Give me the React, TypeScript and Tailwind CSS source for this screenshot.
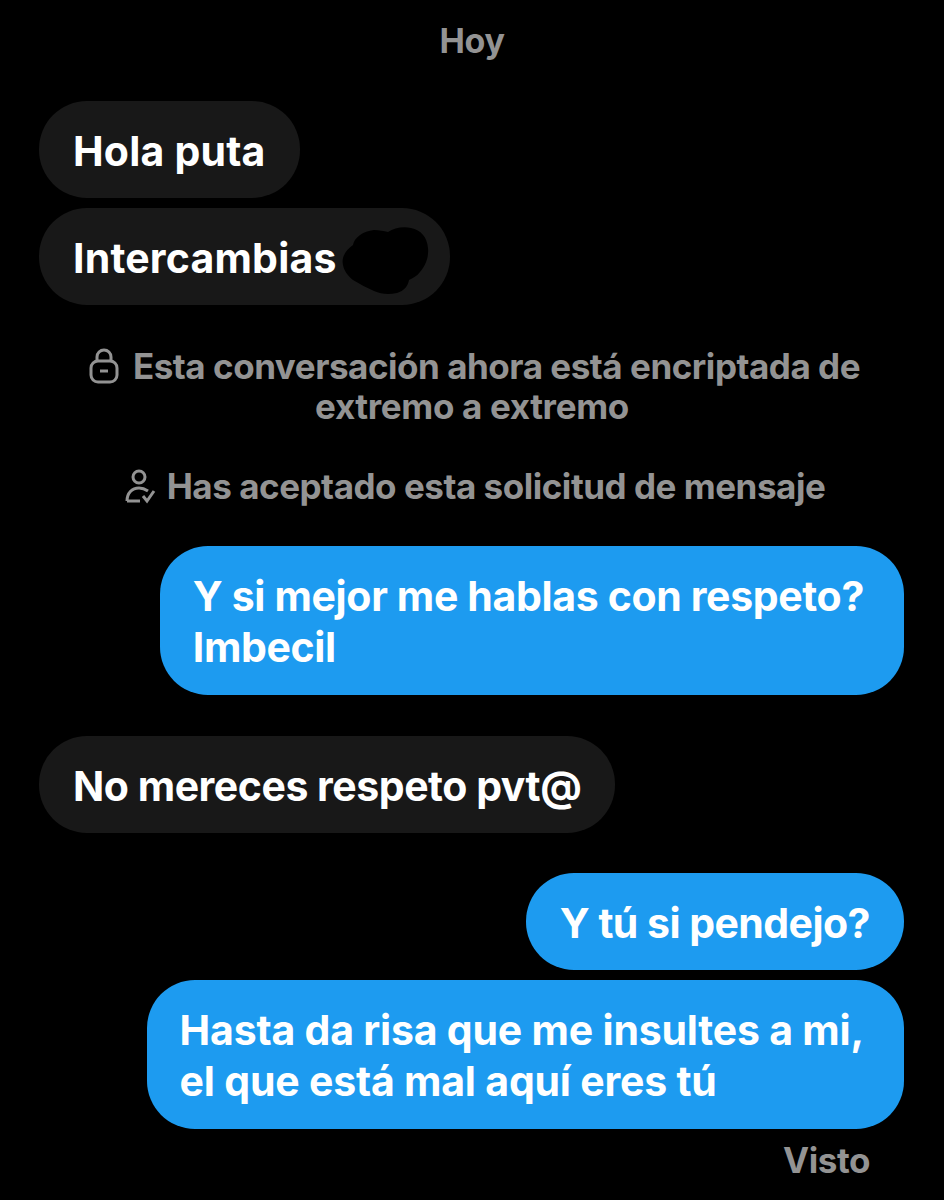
const Received = ({ children }: { children: React.ReactNode }) => (
  <div className="w-fit rounded-[48px] bg-[#181818] px-[34px] pt-[25px] pb-[21px] text-white">{children}</div>
);

const Sent = ({ children, wide }: { children: React.ReactNode; wide?: boolean }) => (
  <div
    className={
      wide
        ? 'ml-auto w-fit rounded-[48px] bg-[#1d9bf0] pt-[25px] pr-[40px] pb-[22px] pl-[33px] text-white'
        : 'ml-auto w-fit rounded-[48px] bg-[#1d9bf0] px-[34px] pt-[25px] pb-[21px] text-white'
    }
  >
    {children}
  </div>
);

const LockIcon = () => (
  <svg width="30" height="36" viewBox="0 0 30 36" fill="none" stroke="#939393" strokeWidth="3" className="mr-[14px] shrink-0">
    <path d="M8 14V9a7 7 0 0 1 14 0v5" />
    <rect x="2" y="13" width="26" height="21" rx="7" />
    <path d="M11 23h8" />
  </svg>
);

const UserCheckIcon = () => (
  <svg width="31" height="36" viewBox="0 0 31 36" fill="none" stroke="#939393" strokeWidth="3" className="mr-[11px] shrink-0">
    <circle cx="14" cy="9" r="6" />
    <path d="M2 33C2 25 7 20 14 20c3 0 6 1 9 3" />
    <path d="M2 33h13" />
    <path d="M18 28l4 5 7-10" />
  </svg>
);

export default function App() {
  return (
    <div className="h-[1200px] w-[944px] overflow-hidden bg-black font-['Inter',sans-serif] text-[41px] leading-[51px] font-bold tracking-[-0.55px]">
      <div className="px-10 pt-[15px]">
        <p className="text-center text-[34px] tracking-[-0.3px] text-[#939393]">Hoy</p>
      </div>

      <div className="mt-[35px] flex flex-col gap-[10px] pl-[39px]">
        <Received>
          <span className="tracking-[0.2px]">Hola puta</span>
        </Received>
        <Received>
          <span className="flex items-center tracking-[0.2px]">
            Intercambias
            <svg width="75" height="51" viewBox="0 0 75 51" className="ml-[4px] overflow-visible">
              <path
                d="M2 32C0 23 6 16 12 12 13 5 22-2 33-3 38-3 43-2 47-1 53-5 62-7 70-5 80-3 86 4 87 15 88 25 84 33 79 39 76 43 72 45 68 47 67 53 63 58 56 60 47 62 40 61 33 58 26 55 19 51 12 47 7 43 3 38 2 32z"
                fill="#000"
              />
            </svg>
          </span>
        </Received>
      </div>

      <div className="mt-[41px] text-center text-[35px] leading-[40px] tracking-[-0.47px] text-[#939393]">
        <p className="flex items-center justify-center pl-[5px]">
          <LockIcon />
          Esta conversación ahora está encriptada de
        </p>
        <p className="tracking-[-0.35px]">extremo a extremo</p>
        <p className="mt-[40px] flex items-center justify-center pl-[6px]">
          <UserCheckIcon />
          Has aceptado esta solicitud de mensaje
        </p>
      </div>

      <div className="mt-[40px] pr-[40px]">
        <Sent wide>
          <span className="tracking-[-0.35px]">
            Y si mejor me hablas con respeto?
            <br />
            Imbecil
          </span>
        </Sent>
      </div>

      <div className="mt-[41px] pl-[39px]">
        <Received>
          <span className="tracking-[-0.47px]">No mereces respeto pvt@</span>
        </Received>
      </div>

      <div className="mt-[40px] flex flex-col gap-[10px] pr-[40px]">
        <Sent>Y tú si pendejo?</Sent>
        <Sent wide>
          <span className="tracking-[-0.2px]">
            Hasta da risa que me insultes a mi,
            <br />
            el que está mal aquí eres tú
          </span>
        </Sent>
      </div>

      <p className="mt-[11px] pr-[74px] text-right text-[35px] leading-[40px] tracking-[-0.45px] text-[#939393]">Visto</p>
    </div>
  );
}
